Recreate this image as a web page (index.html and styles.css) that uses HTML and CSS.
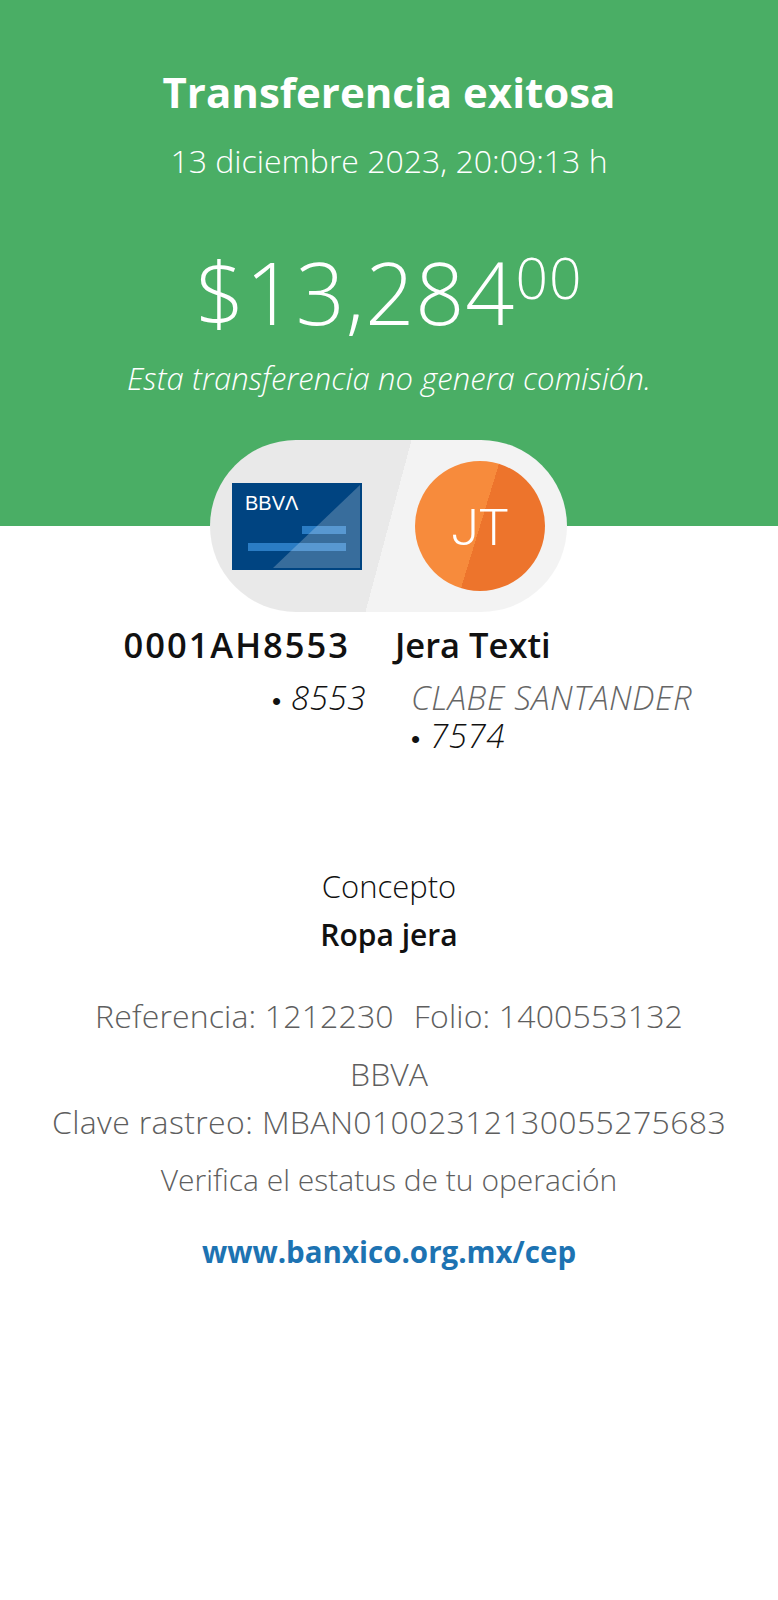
FILE: index.html
```html
<!DOCTYPE html>
<html lang="es">

<head>
    <meta charset="UTF-8">
    <meta name="viewport" content="width=device-width, initial-scale=1.0">
    <title>Transferencia exitosa</title>
    <link rel="stylesheet" href="styles.css">
</head>

<body>
    <header class="banner">
        <h1 class="title">Transferencia exitosa</h1>
        <p class="date">13 diciembre 2023, 20:09:13 h</p>
        <p class="amount">$13,284<sup class="cents">00</sup></p>
        <p class="note">Esta transferencia no genera comisión.</p>
    </header>

    <div class="pill">
        <svg class="card" width="130" height="87" viewBox="0 0 130 87">
            <rect width="130" height="87" fill="#004481" />
            <rect x="16" y="60" width="98" height="8" fill="#2a7cc4" />
            <rect x="70" y="43" width="44" height="8" fill="#2a7cc4" />
            <polygon points="128,2 128,85 41,85" fill="#ffffff" fill-opacity="0.22" />
            <text class="card-logo" x="13" y="27">BBVΛ</text>
        </svg>
        <div class="avatar">JT</div>
    </div>

    <div class="parties">
        <div class="name name-from">0001AH8553</div>
        <div class="name name-to">Jera Texti</div>
        <div class="sub sub-from"><span class="dot">•</span> 8553</div>
        <div class="sub sub-to">
            <div class="sub-line bank">CLABE SANTANDER</div>
            <div class="sub-line"><span class="dot">•</span> 7574</div>
        </div>
    </div>

    <section class="details">
        <p class="concept-label">Concepto</p>
        <p class="concept">Ropa jera</p>
        <p class="line refs"><span>Referencia: 1212230</span><span>Folio: 1400553132</span></p>
        <p class="line bank-line">BBVA</p>
        <p class="line tracking">Clave rastreo: MBAN01002312130055275683</p>
        <p class="line verify">Verifica el estatus de tu operación</p>
        <p class="link">www.banxico.org.mx/cep</p>
    </section>
</body>

</html>
```

FILE: styles.css
```css
body {
    margin: 0;
    background-color: #ffffff;
    font-family: "Open Sans", "Liberation Sans", sans-serif;
    font-weight: 300;
    color: #111111;
}

p,
h1 {
    margin: 0;
}

.banner {
    height: 526px;
    box-sizing: border-box;
    padding-top: 64px;
    background-color: #4aae65;
    color: #ffffff;
    text-align: center;
}

.title {
    font-size: 42px;
    line-height: 56px;
    font-weight: 700;
}

.date {
    margin-top: 21px;
    font-size: 32px;
    line-height: 40px;
}

.amount {
    margin-top: 56px;
    font-size: 86px;
    line-height: 110px;
    letter-spacing: 1px;
}

.cents {
    font-size: 57px;
    line-height: 0;
    vertical-align: 26px;
}

.note {
    margin-top: 11px;
    font-size: 31px;
    line-height: 40px;
    font-style: italic;
    letter-spacing: 0.1px;
}

.pill {
    width: 357px;
    height: 172px;
    box-sizing: border-box;
    margin: -86px 0 0 210px;
    padding: 0 22px;
    display: flex;
    align-items: center;
    justify-content: space-between;
    border-radius: 86px;
    background: linear-gradient(105deg, #e9e9e9 50%, #f3f3f3 50%);
}

.card-logo {
    font-family: "Liberation Sans", sans-serif;
    font-size: 20px;
    fill: #ffffff;
}

.avatar {
    width: 130px;
    height: 130px;
    border-radius: 50%;
    background: linear-gradient(107deg, #f78b3c 50%, #ed742c 50%);
    color: #ffffff;
    font-family: "Roboto", sans-serif;
    font-size: 50px;
    line-height: 134px;
    text-align: center;
}

.parties {
    display: grid;
    grid-template-columns: 389px 389px;
    margin-top: 10px;
}

.name {
    font-size: 34.5px;
    line-height: 46px;
    font-weight: 600;
}

.name-from {
    text-align: right;
    padding-right: 39px;
    letter-spacing: 2px;
}

.name-to {
    padding-left: 6px;
}

.sub {
    margin-top: 11px;
    font-size: 33px;
    line-height: 38px;
    font-style: italic;
    letter-spacing: 0.6px;
}

.sub-from {
    text-align: right;
    padding-right: 23px;
}

.sub-to {
    padding-left: 22px;
}

.sub-line {
    height: 38px;
}

.dot {
    font-family: "Liberation Sans", sans-serif;
    font-style: normal;
    font-size: 26px;
}

.bank {
    color: #666666;
}

.details {
    margin-top: 111px;
    text-align: center;
}

.concept-label {
    font-size: 31px;
    line-height: 40px;
}

.concept {
    margin-top: 9px;
    font-size: 30px;
    line-height: 40px;
    font-weight: 600;
}

.line {
    font-size: 32px;
    line-height: 40px;
    color: #5e5e5e;
}

.refs {
    margin-top: 41px;
    display: flex;
    justify-content: center;
    gap: 20px;
    letter-spacing: 0.15px;
}

.bank-line {
    margin-top: 18px;
}

.tracking {
    margin-top: 8px;
    letter-spacing: 0.37px;
}

.verify {
    margin-top: 18px;
    font-size: 30px;
}

.link {
    margin-top: 32px;
    font-size: 29.5px;
    line-height: 40px;
    font-weight: 700;
    color: #1d73b2;
}
```
